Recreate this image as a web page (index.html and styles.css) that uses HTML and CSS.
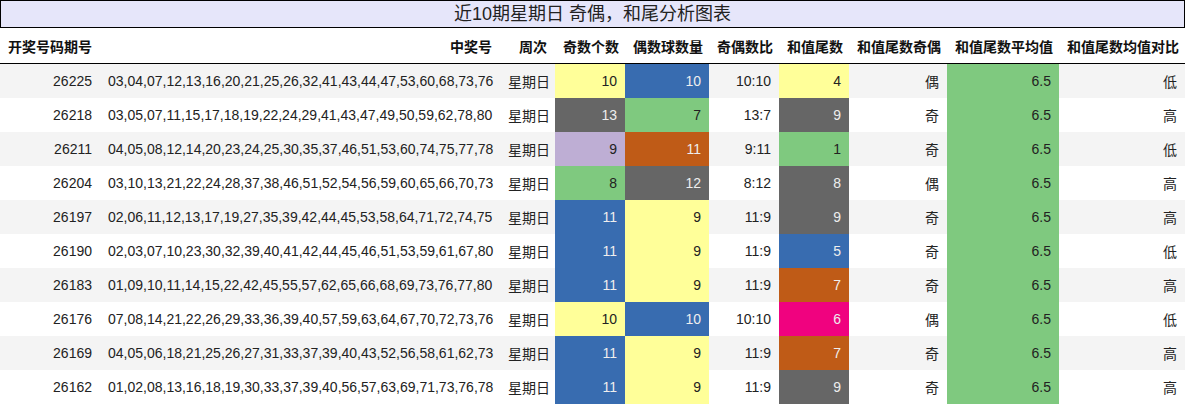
FILE: index.html
```html
<!DOCTYPE html>
<html lang="zh">
<head>
<meta charset="utf-8">
<title>近10期星期日 奇偶，和尾分析图表</title>
<link rel="stylesheet" href="styles.css">
</head>
<body>
<div class="page">
  <div class="title">近10期星期日 奇偶，和尾分析图表</div>
  <table class="grid">
    <colgroup>
      <col class="c1"><col class="c2"><col class="c3"><col class="c4"><col class="c5">
      <col class="c6"><col class="c7"><col class="c8"><col class="c9"><col class="c10">
    </colgroup>
    <thead>
      <tr>
        <th class="left">开奖号码期号</th><th>中奖号</th><th>周次</th><th>奇数个数</th><th>偶数球数量</th>
        <th>奇偶数比</th><th>和值尾数</th><th>和值尾数奇偶</th><th>和值尾数平均值</th><th>和值尾数均值对比</th>
      </tr>
    </thead>
    <tbody>
      <tr><td>26225</td><td>03,04,07,12,13,16,20,21,25,26,32,41,43,44,47,53,60,68,73,76</td><td>星期日</td><td class="yellow">10</td><td class="blue">10</td><td>10:10</td><td class="yellow">4</td><td>偶</td><td class="green">6.5</td><td>低</td></tr>
      <tr><td>26218</td><td>03,05,07,11,15,17,18,19,22,24,29,41,43,47,49,50,59,62,78,80</td><td>星期日</td><td class="gray">13</td><td class="green">7</td><td>13:7</td><td class="gray">9</td><td>奇</td><td class="green">6.5</td><td>高</td></tr>
      <tr><td>26211</td><td>04,05,08,12,14,20,23,24,25,30,35,37,46,51,53,60,74,75,77,78</td><td>星期日</td><td class="lav">9</td><td class="orange">11</td><td>9:11</td><td class="green">1</td><td>奇</td><td class="green">6.5</td><td>低</td></tr>
      <tr><td>26204</td><td>03,10,13,21,22,24,28,37,38,46,51,52,54,56,59,60,65,66,70,73</td><td>星期日</td><td class="green">8</td><td class="gray">12</td><td>8:12</td><td class="gray">8</td><td>偶</td><td class="green">6.5</td><td>高</td></tr>
      <tr><td>26197</td><td>02,06,11,12,13,17,19,27,35,39,42,44,45,53,58,64,71,72,74,75</td><td>星期日</td><td class="blue">11</td><td class="yellow">9</td><td>11:9</td><td class="gray">9</td><td>奇</td><td class="green">6.5</td><td>高</td></tr>
      <tr><td>26190</td><td>02,03,07,10,23,30,32,39,40,41,42,44,45,46,51,53,59,61,67,80</td><td>星期日</td><td class="blue">11</td><td class="yellow">9</td><td>11:9</td><td class="blue">5</td><td>奇</td><td class="green">6.5</td><td>低</td></tr>
      <tr><td>26183</td><td>01,09,10,11,14,15,22,42,45,55,57,62,65,66,68,69,73,76,77,80</td><td>星期日</td><td class="blue">11</td><td class="yellow">9</td><td>11:9</td><td class="orange">7</td><td>奇</td><td class="green">6.5</td><td>高</td></tr>
      <tr><td>26176</td><td>07,08,14,21,22,26,29,33,36,39,40,57,59,63,64,67,70,72,73,76</td><td>星期日</td><td class="yellow">10</td><td class="blue">10</td><td>10:10</td><td class="pink">6</td><td>偶</td><td class="green">6.5</td><td>低</td></tr>
      <tr><td>26169</td><td>04,05,06,18,21,25,26,27,31,33,37,39,40,43,52,56,58,61,62,73</td><td>星期日</td><td class="blue">11</td><td class="yellow">9</td><td>11:9</td><td class="orange">7</td><td>奇</td><td class="green">6.5</td><td>高</td></tr>
      <tr><td>26162</td><td>01,02,08,13,16,18,19,30,33,37,39,40,56,57,63,69,71,73,76,78</td><td>星期日</td><td class="blue">11</td><td class="yellow">9</td><td>11:9</td><td class="gray">9</td><td>奇</td><td class="green">6.5</td><td>高</td></tr>
    </tbody>
  </table>
</div>
</body>
</html>
```

FILE: styles.css
```css
html, body {
  margin: 0;
  padding: 0;
  background: #ffffff;
}

.page {
  width: 1185px;
  font-family: "Liberation Sans", "Noto Sans CJK SC", sans-serif;
  color: #222222;
}

.title {
  box-sizing: border-box;
  height: 28px;
  border: 1px solid #000000;
  background: #e6e6fa;
  text-align: center;
  font-size: 18px;
  line-height: 26px;
  color: #222222;
}

.grid {
  width: 1185px;
  table-layout: fixed;
  border-collapse: collapse;
  border-spacing: 0;
  font-size: 14px;
}

.c1 { width: 100px; }
.c2 { width: 400px; }
.c3 { width: 55px; }
.c4 { width: 70px; }
.c5 { width: 84px; }
.c6 { width: 70px; }
.c7 { width: 70px; }
.c8 { width: 98px; }
.c9 { width: 112px; }
.c10 { width: 126px; }

.grid th {
  height: 35px;
  padding: 0 8px;
  text-align: right;
  font-weight: bold;
  color: #111111;
  border-bottom: 1px solid #000000;
  white-space: nowrap;
  overflow: hidden;
}

.grid th.left {
  text-align: left;
}

.grid td {
  height: 34px;
  padding: 0 8px;
  text-align: right;
  white-space: nowrap;
  overflow: hidden;
}

.grid tbody tr:nth-child(odd) td {
  background: #f4f4f4;
}

.grid tbody tr:nth-child(even) td {
  background: #ffffff;
}

.grid tbody tr td.yellow { background: #ffff99; color: #222222; }
.grid tbody tr td.blue { background: #386cb0; color: #eeeeee; }
.grid tbody tr td.green { background: #7fc97f; color: #222222; }
.grid tbody tr td.gray { background: #666666; color: #eeeeee; }
.grid tbody tr td.lav { background: #beaed4; color: #222222; }
.grid tbody tr td.orange { background: #bf5b17; color: #eeeeee; }
.grid tbody tr td.pink { background: #f0027f; color: #eeeeee; }
```
